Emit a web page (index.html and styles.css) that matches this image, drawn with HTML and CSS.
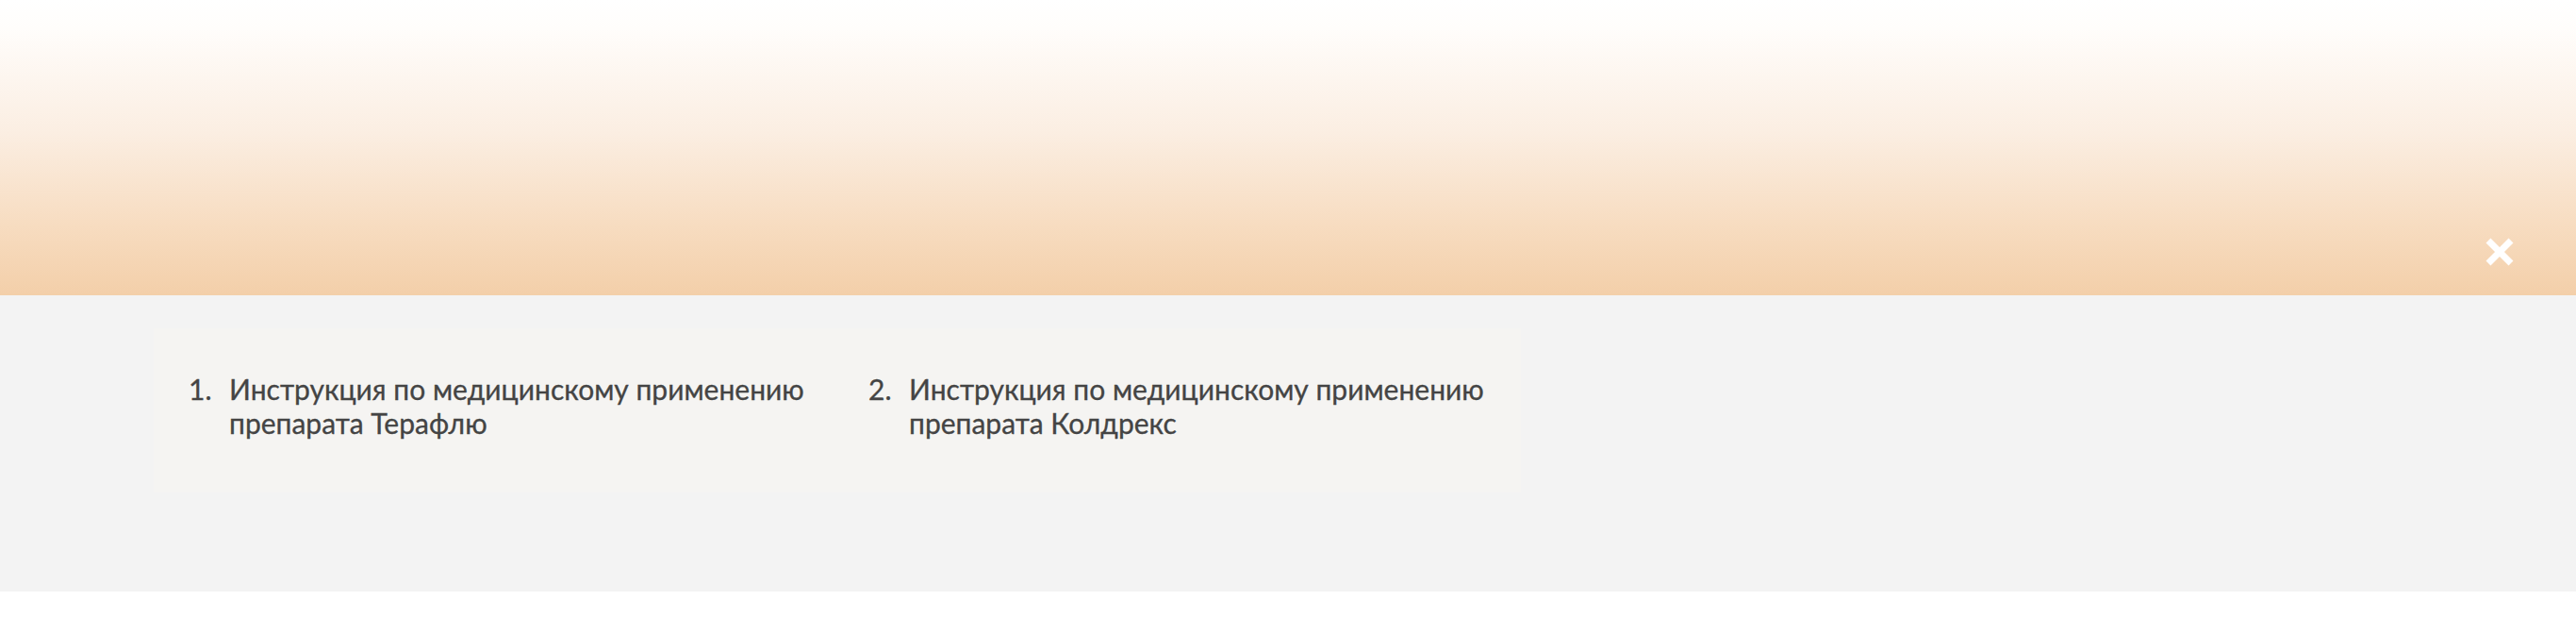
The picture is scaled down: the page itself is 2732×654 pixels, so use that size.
FILE: index.html
```html
<!DOCTYPE html>
<html lang="ru">
<head>
<meta charset="utf-8">
<link rel="stylesheet" href="styles.css">
</head>
<body>
<header class="hero">
  <button class="close" aria-label="Закрыть">
    <svg width="30" height="30" viewBox="0 0 30 30"><path d="M3 3L27 27M27 3L3 27" stroke="#fff" stroke-width="7" stroke-linecap="butt"/></svg>
  </button>
</header>
<section class="sources">
  <ol class="list">
    <li class="item"><span class="num">1.</span><span class="text">Инструкция по медицинскому применению препарата Терафлю</span></li>
    <li class="item"><span class="num">2.</span><span class="text">Инструкция по медицинскому применению препарата Колдрекс</span></li>
  </ol>
</section>
</body>
</html>
```
FILE: styles.css
```css
html, body {
  margin: 0;
  padding: 0;
  background: #ffffff;
}
body {
  font-family: Lato, "Noto Sans", sans-serif;
}
.hero {
  height: 313px;
  background: linear-gradient(to bottom, #ffffff 0px, #fffdfb 30px, #fbeee2 140px, #f7dcc0 240px, #f3cfa9 313px);
  display: flex;
  justify-content: flex-end;
  align-items: flex-end;
  padding: 0 66px 31px 0;
  box-sizing: border-box;
}
.close {
  width: 30px;
  height: 30px;
  padding: 0;
  border: 0;
  background: none;
  display: block;
}
.close svg {
  display: block;
}
.sources {
  height: 314px;
  background: #f3f3f3;
  padding: 35px 0 0 163px;
  box-sizing: border-box;
}
.list {
  list-style: none;
  margin: 0;
  width: 1450px;
  height: 174px;
  box-sizing: border-box;
  padding: 46px 0 0 37px;
  background: #f5f4f2;
  display: grid;
  grid-template-columns: 721px 680px;
  align-content: start;
}
.item {
  display: flex;
  font-size: 30px;
  line-height: 36px;
  color: #444444;
  -webkit-text-stroke: 0.3px #444444;
}
.num {
  width: 43px;
  flex: none;
}
.text {
  width: 650px;
}
```
